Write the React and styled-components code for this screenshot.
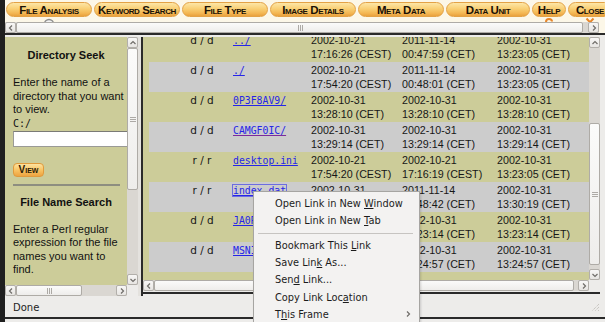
import React from "react"
import styled, { createGlobalStyle } from "styled-components"

const GlobalStyle = createGlobalStyle`
  html, body {
    margin: 0;
    padding: 0;
    background: #ffffff;
    overflow: hidden;
  }
`

const tabs = [
  { label: "File Analysis", width: 86, icon: "lens" },
  { label: "Keyword Search", width: 86 },
  { label: "File Type", width: 86 },
  { label: "Image Details", width: 86 },
  { label: "Meta Data", width: 86 },
  { label: "Data Unit", width: 84 },
  { label: "Help", width: 34, icon: "help" },
  { label: "Close", width: 44, icon: "close" },
]

const rows = [
  { type: "d / d", name: "../", dates: [["2002-10-21", "17:16:26 (CEST)"], ["2011-11-14", "00:47:59 (CET)"], ["2002-10-31", "13:23:05 (CET)"]] },
  { type: "d / d", name: "./", dates: [["2002-10-21", "17:54:20 (CEST)"], ["2011-11-14", "00:48:01 (CET)"], ["2002-10-31", "13:23:05 (CET)"]] },
  { type: "d / d", name: "0P3F8AV9/", dates: [["2002-10-31", "13:28:10 (CET)"], ["2002-10-31", "13:28:10 (CET)"], ["2002-10-31", "13:28:10 (CET)"]] },
  { type: "d / d", name: "CAMGF0IC/", visited: true, dates: [["2002-10-31", "13:29:14 (CET)"], ["2002-10-31", "13:29:14 (CET)"], ["2002-10-31", "13:29:14 (CET)"]] },
  { type: "r / r", name: "desktop.ini", dates: [["2002-10-21", "17:54:20 (CEST)"], ["2002-10-21", "17:16:19 (CEST)"], ["2002-10-31", "13:23:05 (CET)"]] },
  { type: "r / r", name: "index.dat", focused: true, dates: [["2002-10-31", "13:30:19 (CET)"], ["2011-11-14", "00:48:42 (CET)"], ["2002-10-31", "13:30:19 (CET)"]] },
  { type: "d / d", name: "JA0RT1KQ/", dates: [["2002-10-31", "13:23:14 (CET)"], ["2002-10-31", "13:23:14 (CET)"], ["2002-10-31", "13:23:14 (CET)"]] },
  { type: "d / d", name: "MSNIE5D1/", dates: [["2002-10-31", "13:24:57 (CET)"], ["2002-10-31", "13:24:57 (CET)"], ["2002-10-31", "13:24:57 (CET)"]] },
]

const menuItems = [
  { pre: "Open Link in New ", key: "W", post: "indow" },
  { pre: "Open Link in New ", key: "T", post: "ab" },
  { separator: true },
  { pre: "Bookmark This ", key: "L", post: "ink" },
  { pre: "Save Lin", key: "k", post: " As..." },
  { pre: "Sen", key: "d", post: " Link..." },
  { pre: "Copy Link Loc", key: "a", post: "tion" },
  { pre: "T", key: "h", post: "is Frame", sub: true },
]

function Chevron({ dir }) {
  const d = {
    left: "M5 1.5 L2.5 4 L5 6.5",
    right: "M3 1.5 L5.5 4 L3 6.5",
    up: "M1.5 5 L4 2.5 L6.5 5",
    down: "M1.5 3 L4 5.5 L6.5 3",
  }[dir]
  return (
    <svg width="8" height="8" viewBox="0 0 8 8">
      <path d={d} fill="none" stroke="#6f6d69" strokeWidth="1.2" />
    </svg>
  )
}

function Grip({ vertical }) {
  return vertical ? (
    <svg width="6" height="6" viewBox="0 0 6 6">
      <path d="M0 1.5 H6 M0 3.5 H6 M0 5.5 H6" stroke="#9a9792" strokeWidth="0.8" />
    </svg>
  ) : (
    <svg width="6" height="6" viewBox="0 0 6 6">
      <path d="M1.5 0 V6 M3.5 0 V6 M5.5 0 V6" stroke="#9a9792" strokeWidth="0.8" />
    </svg>
  )
}

function Scroll({ vertical, size, length, before, thumb }) {
  return (
    <Bar $vertical={vertical} $size={size} $length={length}>
      <ArrowBtn $size={size}><Chevron dir={vertical ? "up" : "left"} /></ArrowBtn>
      <Gap $len={before} />
      <Thumb $len={thumb}><Grip vertical={vertical} /></Thumb>
      <Gap />
      <ArrowBtn $size={size}><Chevron dir={vertical ? "down" : "right"} /></ArrowBtn>
    </Bar>
  )
}

function TabIcon({ kind }) {
  if (kind === "lens") {
    return (
      <svg width="12" height="12" viewBox="0 0 12 12">
        <circle cx="6" cy="7" r="4.5" fill="#f4f4f4" stroke="#8d8d8d" strokeWidth="1.4" />
      </svg>
    )
  }
  if (kind === "help") {
    return (
      <svg width="10" height="12" viewBox="0 0 10 12">
        <path d="M2 5 Q2 2 5 2 Q8 2 8 4.5" fill="none" stroke="#e8862a" strokeWidth="2" />
      </svg>
    )
  }
  if (kind === "close") {
    return (
      <svg width="10" height="12" viewBox="0 0 10 12">
        <path d="M1.5 1.5 L8.5 9 M8.5 1.5 L1.5 9" stroke="#e8862a" strokeWidth="2" />
      </svg>
    )
  }
  return null
}

export default function App() {
  return (
    <>
      <GlobalStyle />
      <Window>
        <TopFrame>
          <TabStrip>
            {tabs.map(t => (
              <TabColumn key={t.label} $width={t.width}>
                <Tab>{t.label}</Tab>
                <IconSlot>{t.icon && <TabIcon kind={t.icon} />}</IconSlot>
              </TabColumn>
            ))}
          </TabStrip>
          <TopScrollRow>
            <Scroll size={11} length={594} before={0} thumb={567} />
          </TopScrollRow>
        </TopFrame>
        <DarkRule />
        <LightRule />

        <Middle>
          <LeftFrame>
            <FrameBody>
              <LeftContent>
                <Heading>Directory Seek</Heading>
                <Para $top={14}>
                  Enter the name of a directory that you want to view.
                </Para>
                <PathLabel>C:/</PathLabel>
                <DirInput type="text" />
                <ViewButton>View</ViewButton>
                <Rule />
                <Heading $top={9}>File Name Search</Heading>
                <Para $top={14}>
                  Enter a Perl regular expression for the file names you want to find.
                </Para>
              </LeftContent>
              <Scroll vertical size={11} length={248} before={0} thumb={142} />
            </FrameBody>
            <ScrollRow>
              <Scroll size={11} length={122} before={0} thumb={66} />
              <Corner $w={11} />
            </ScrollRow>
          </LeftFrame>

          <FrameGap />
          <FrameDivider />

          <RightFrame>
            <FrameBody>
              <RightContent>
                <Table>
                  {rows.map((r, i) => (
                    <Row key={r.name} $alt={i % 2 === 1}>
                      <TypeCell>{r.type}</TypeCell>
                      <NameCell>
                        <FileLink $visited={r.visited} $focused={r.focused}>{r.name}</FileLink>
                      </NameCell>
                      {r.dates.map((d, j) => (
                        <DateCell key={j}>
                          {d[0]}
                          <br />
                          {d[1]}
                        </DateCell>
                      ))}
                    </Row>
                  ))}
                </Table>
              </RightContent>
              <Scroll vertical size={11} length={243} before={75} thumb={142} />
            </FrameBody>
            <ScrollRow>
              <Scroll size={11} length={446} before={0} thumb={420} />
              <Corner $w={11} />
            </ScrollRow>
            <BottomEdge />
          </RightFrame>
          <SideStrip />
        </Middle>

        <StatusBar>
          <span>Done</span>
          <svg width="10" height="10" viewBox="0 0 10 10">
            <path d="M9 2 L2 9 M9 5 L5 9 M9 8 L8 9" stroke="#b9b6b0" strokeWidth="1" strokeDasharray="1 1" />
          </svg>
        </StatusBar>
        <DarkRule />

        <ContextMenu>
          {menuItems.map((m, i) =>
            m.separator ? (
              <MenuSeparator key={i} />
            ) : (
              <MenuItem key={i}>
                <span>
                  {m.pre}
                  <u>{m.key}</u>
                  {m.post}
                </span>
                {m.sub && <Chevron dir="right" />}
              </MenuItem>
            )
          )}
        </ContextMenu>
      </Window>
    </>
  )
}

const Window = styled.div`
  position: relative;
  width: 605px;
  height: 322px;
  box-sizing: border-box;
  border-left: 5px solid #1f1f1f;
  background: #edecea;
  display: flex;
  flex-direction: column;
  overflow: hidden;
  font-family: "DejaVu Sans", sans-serif;
`

const TopFrame = styled.div`
  height: 33px;
  background: #fcf7e8;
  display: flex;
  flex-direction: column;
  flex-shrink: 0;
`

const TabStrip = styled.div`
  height: 22px;
  display: flex;
  gap: 2px;
  padding: 2px 0 0 1px;
  box-sizing: border-box;
  overflow: hidden;
`

const TabColumn = styled.div`
  flex: 0 0 ${p => p.$width}px;
  display: flex;
  flex-direction: column;
`

const Tab = styled.div`
  height: 15px;
  border-radius: 8px;
  box-sizing: border-box;
  border: 1px solid #e3a246;
  background: linear-gradient(#fde6a6 0%, #f9cf74 45%, #f3b552 80%, #e9a13d 100%);
  display: flex;
  align-items: center;
  justify-content: center;
  font-family: "Liberation Sans", Arial, sans-serif;
  font-weight: bold;
  font-variant: small-caps;
  font-size: 11.5px;
  letter-spacing: -0.4px;
  color: #1a1106;
  white-space: nowrap;
`

const IconSlot = styled.div`
  height: 5px;
  overflow: hidden;
  display: flex;
  justify-content: center;
`

const TopScrollRow = styled.div`
  display: flex;
  padding-right: 6px;
`

const Bar = styled.div`
  display: flex;
  flex-direction: ${p => (p.$vertical ? "column" : "row")};
  ${p => (p.$vertical ? `width: ${p.$size}px; height: ${p.$length}px;` : `height: ${p.$size}px; width: ${p.$length}px;`)}
  flex-shrink: 0;
  background: #dad7d2;
  box-sizing: border-box;
`

const ArrowBtn = styled.div`
  flex: 0 0 ${p => p.$size}px;
  display: flex;
  align-items: center;
  justify-content: center;
  box-sizing: border-box;
  border: 1px solid #b2afaa;
  border-radius: 2px;
  background: linear-gradient(#f8f7f6, #e7e5e2);
`

const Gap = styled.div`
  flex: ${p => (p.$len != null ? `0 0 ${p.$len}px` : "1 1 auto")};
`

const Thumb = styled.div`
  flex: 0 0 ${p => p.$len}px;
  display: flex;
  align-items: center;
  justify-content: center;
  box-sizing: border-box;
  border: 1px solid #aeaba6;
  border-radius: 2px;
  background: linear-gradient(#fbfbfa, #eeedeb);
`

const DarkRule = styled.div`
  height: 2px;
  flex-shrink: 0;
  background: #2a2a2a;
`

const LightRule = styled.div`
  height: 2px;
  flex-shrink: 0;
  background: #edecea;
`

const Middle = styled.div`
  height: 259px;
  display: flex;
  flex-shrink: 0;
`

const LeftFrame = styled.div`
  width: 133px;
  display: flex;
  flex-direction: column;
`

const FrameBody = styled.div`
  flex: 1;
  display: flex;
  min-height: 0;
`

const ScrollRow = styled.div`
  display: flex;
  flex-shrink: 0;
`

const Corner = styled.div`
  width: ${p => p.$w}px;
  background: #edecea;
`

const LeftContent = styled.div`
  width: 122px;
  background: #cccc99;
  overflow: hidden;
  padding-top: 11px;
  box-sizing: border-box;
  font-family: "Liberation Sans", Arial, sans-serif;
  font-size: 11px;
  color: #111;
`

const Heading = styled.div`
  margin-top: ${p => p.$top || 0}px;
  text-align: center;
  font-weight: bold;
  line-height: 14px;
`

const Para = styled.div`
  margin-top: ${p => p.$top || 0}px;
  padding-left: 8px;
  width: 112px;
  line-height: 13.5px;
`

const PathLabel = styled.div`
  padding-left: 8px;
  font-family: "DejaVu Sans Mono", monospace;
  font-size: 10px;
  line-height: 13px;
`

const DirInput = styled.input`
  display: block;
  margin: 1px 0 0 8px;
  width: 126px;
  height: 16px;
  box-sizing: border-box;
  border: 1px solid #9a9a96;
  border-top-color: #7a7a76;
  background: #ffffff;
  padding: 0;
`

const ViewButton = styled.div`
  margin: 16px 0 0 8px;
  width: 31px;
  height: 14px;
  box-sizing: border-box;
  border-radius: 4px;
  border: 1px solid #e09a3c;
  background: linear-gradient(#fde3a0, #f8c465 50%, #eea441);
  display: flex;
  align-items: center;
  justify-content: center;
  font-weight: bold;
  font-variant: small-caps;
  font-size: 10px;
  color: #2a1a06;
`

const Rule = styled.div`
  margin: 7px 0 0 8px;
  width: 107px;
  height: 2px;
  background: #8e8e80;
`

const FrameGap = styled.div`
  width: 3px;
  background: #e4e2de;
`

const FrameDivider = styled.div`
  width: 2px;
  background: #2a2a2a;
`

const RightFrame = styled.div`
  width: 457px;
  display: flex;
  flex-direction: column;
`

const BottomEdge = styled.div`
  height: 4px;
  flex-shrink: 0;
  margin-top: 1px;
  border-top: 2px solid #2a2a2a;
  box-sizing: border-box;
`

const SideStrip = styled.div`
  flex: 1;
  background: #edecea;
`

const RightContent = styled.div`
  width: 446px;
  background: #cccc99;
  overflow: hidden;
`

const Table = styled.div`
  margin: -5px 0 0 6px;
  width: 520px;
`

const Row = styled.div`
  height: 30px;
  display: grid;
  grid-template-columns: 84px 78px 91px 95px 95px 77px;
  background: ${p => (p.$alt ? "#cccccc" : "#cccc99")};
  font-family: "Liberation Sans", Arial, sans-serif;
  font-size: 10.7px;
  line-height: 14px;
  color: #161616;
`

const TypeCell = styled.div`
  padding: 1px 0 0 22px;
  text-align: center;
  font-family: "DejaVu Sans", sans-serif;
  font-size: 10.5px;
`

const NameCell = styled.div`
  padding-top: 1px;
`

const FileLink = styled.span`
  font-family: "DejaVu Sans Mono", monospace;
  font-size: 9.8px;
  color: #2525e8;
  text-decoration: underline;
  text-decoration-color: ${p => (p.$visited ? "#7b2a9c" : "#2525e8")};
  outline: ${p => (p.$focused ? "1px solid #6d6de0" : "none")};
  outline-offset: 0;
`

const DateCell = styled.div`
  padding-top: 1px;
  white-space: nowrap;
`

const StatusBar = styled.div`
  height: 20px;
  flex-shrink: 0;
  display: flex;
  align-items: center;
  justify-content: space-between;
  padding: 0 5px 0 8px;
  font-size: 10px;
  color: #1e1e1e;
  margin-top: 1px;
`

const ContextMenu = styled.div`
  position: absolute;
  left: 248px;
  top: 191px;
  width: 167px;
  height: 150px;
  box-sizing: border-box;
  padding-top: 3px;
  background: #f3f2f1;
  border: 1px solid #a6a5a2;
  box-shadow: 1px 1px 2px rgba(0, 0, 0, 0.15);
`

const MenuItem = styled.div`
  height: 17.3px;
  display: flex;
  align-items: center;
  justify-content: space-between;
  padding: 0 7px 0 21px;
  font-family: "DejaVu Sans", sans-serif;
  font-size: 9.8px;
  color: #1c1c1c;
  white-space: nowrap;

  u {
    text-underline-offset: 1px;
  }
`

const MenuSeparator = styled.div`
  height: 1px;
  margin: 3px 6px 3px 4px;
  background: #c6c4c1;
`
